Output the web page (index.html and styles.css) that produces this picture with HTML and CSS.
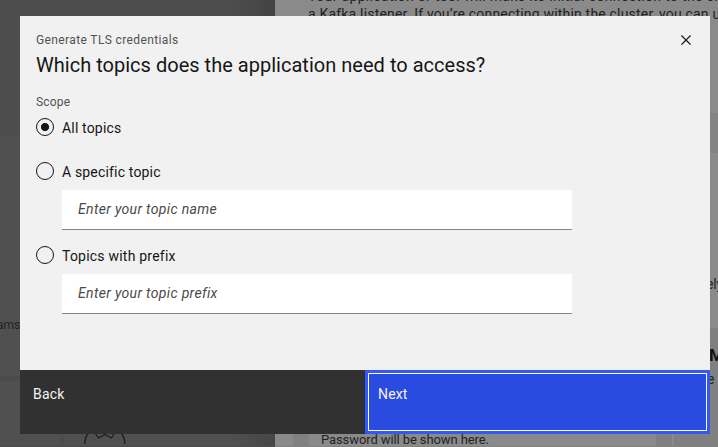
FILE: index.html
```html
<!DOCTYPE html>
<html lang="en">
<head>
<meta charset="utf-8">
<title>Generate TLS credentials</title>
<link rel="stylesheet" href="styles.css">
</head>
<body>
<div class="page">
  <div class="side">
    <div class="side-top"></div>
    <div class="side-mid"><span class="side-label">ams</span></div>
    <div class="side-rule"></div>
    <div class="side-cards">
      <div class="card-left"></div>
      <div class="card-right">
        <svg class="mascot" width="44" height="24" viewBox="0 0 44 24" fill="none" stroke="#1d1d1d" stroke-width="1.3"><path d="M.8 23C1 18 2 15 4 12.500M40.800 23C40.600 18 39.600 15 37.600 12.500M11 12l3.500 5 6.500-3.500 6.500 3.500 3-5"/></svg>
      </div>
    </div>
  </div>
  <div class="panel">
    <p class="intro"><span class="intro-a">Your application or tool will make its initial connection to the clu</span><br><span class="intro-b">a Kafka listener. If you’re connecting within the cluster, you can u</span></p>
    <div class="strip"></div>
    <div class="note"><span>ely</span></div>
    <div class="detail"><b>M</b><span>e</span></div>
    <div class="columns">
      <div class="gutter"></div>
      <div class="password">Password will be shown here.</div>
      <div class="gutter"></div>
      <div class="divider"></div>
      <div class="gutter"></div>
    </div>
  </div>
</div>
<div class="modal" role="dialog">
  <header class="head">
    <div>
      <p class="eyebrow">Generate TLS credentials</p>
      <h1 class="title">Which topics does the application need to access?</h1>
    </div>
    <svg class="close" width="20" height="20" viewBox="0 0 32 32"><path fill="#161616" d="M24 9.4L22.6 8 16 14.6 9.4 8 8 9.4l6.6 6.6L8 22.6 9.4 24l6.6-6.6 6.6 6.6 1.4-1.4-6.6-6.6L24 9.4z"/></svg>
  </header>
  <div class="form">
    <p class="scope">Scope</p>
    <div class="option"><span class="radio checked"></span><span class="all">All topics</span></div>
    <div class="option"><span class="radio"></span><span class="specific">A specific topic</span></div>
    <div class="field"><span class="placeholder">Enter your topic name</span></div>
    <div class="option"><span class="radio"></span><span class="prefix">Topics with prefix</span></div>
    <div class="field"><span class="placeholder">Enter your topic prefix</span></div>
  </div>
  <footer class="actions">
    <div class="back">Back</div>
    <div class="next">Next</div>
  </footer>
</div>
</body>
</html>
```
FILE: styles.css
```css
* { box-sizing: border-box; }
body { margin: 0; width: 718px; height: 447px; overflow: hidden; position: relative; font-family: Roboto, "Liberation Sans", sans-serif; font-size: 14px; line-height: 18px; color: #161616; }
p, h1 { margin: 0; font-weight: 400; }
.page { display: grid; grid-template-columns: 275px 443px; height: 447px; }
.side { display: flex; flex-direction: column; background: linear-gradient(90deg, transparent 230px, #464646 275px), #505050; color: #222; overflow: hidden; }
.side-top { height: 136px; background: rgba(0,0,0,.03); }
.side-mid { height: 240px; padding-top: 179px; }
.side-label { font-size: 12px; margin-left: -3px; }
.side-rule { height: 5px; background: rgba(0,0,0,.05); }
.side-cards { display: flex; height: 66px; border-bottom: 1px solid #4b4b4b; }
.card-left { width: 64px; border-right: 4px solid #4c4c4c; }
.card-right { padding: 40px 0 0 20px; }
.mascot { display: block; }
.panel { display: flex; flex-direction: column; background: #8a8a8a; overflow: hidden; white-space: nowrap; }
.intro { height: 113px; padding-left: 33px; margin-top: -13px; flex-shrink: 0; color: #222; }
.intro-a { letter-spacing: .33px; }
.intro-b { letter-spacing: .19px; }
.strip { height: 40px; margin-top: 13px; background: #838383; }
.note { height: 175px; padding: 122px 0 0 431px; color: #222; }
.note span { letter-spacing: -.2px; }
.detail { display: flex; flex-direction: column; height: 106px; padding: 18px 0 0 432px; background: #808080; gap: 6px; color: #222; }
.detail b { font-size: 17px; padding-left: 2px; color: #111; }
.columns { display: flex; height: 13px; border-bottom: 1px solid #818181; overflow: hidden; }
.columns::before { content: ""; width: 18px; }
.gutter { width: 16px; background: #808080; }
.gutter:last-child { width: 44px; }
.password { width: 347px; padding-left: 12px; font-size: 13px; line-height: 12px; letter-spacing: -.1px; color: #222; }
.divider { width: 2px; }
.modal { position: absolute; left: 20px; top: 16px; width: 690px; height: 418px; display: flex; flex-direction: column; background: #f1f1f1; }
.head { display: flex; justify-content: space-between; padding: 14px 14px 0 16px; height: 76px; }
.eyebrow { font-size: 12px; line-height: 20px; letter-spacing: .38px; color: #525252; }
.title { font-size: 20px; line-height: 30px; letter-spacing: .02px; white-space: nowrap; }
.form { flex: 1; padding-left: 16px; }
.scope { font-size: 12px; line-height: 20px; letter-spacing: .2px; color: #525252; }
.option { display: flex; align-items: center; gap: 8px; height: 30px; }
.option:nth-of-type(1) { margin-bottom: 14px; }
.radio { width: 18px; height: 18px; border: 1.5px solid #161616; border-radius: 50%; }
.checked { background: radial-gradient(circle, #161616 3.7px, transparent 4.4px); }
.option span:last-child { position: relative; top: 1px; }
.all, .specific { letter-spacing: .17px; }
.prefix { letter-spacing: .22px; }
.field { margin: 4px 0 10px 26px; width: 510px; height: 40px; padding: 10px 16px; background: #fff; border-bottom: 1px solid #858585; font-style: italic; color: #4a4a4a; }
.placeholder { letter-spacing: .33px; }
.actions { display: grid; grid-template-columns: 1fr 1fr; height: 64px; color: #f4f4f4; }
.back { padding: 15px 13px; background: #313131; }
.next { padding: 12px 10px; background: #2a4be0; border: 3px solid #3259f8; outline: 1px solid #fff; outline-offset: -4px; }
.back, .next { letter-spacing: .16px; }
```
